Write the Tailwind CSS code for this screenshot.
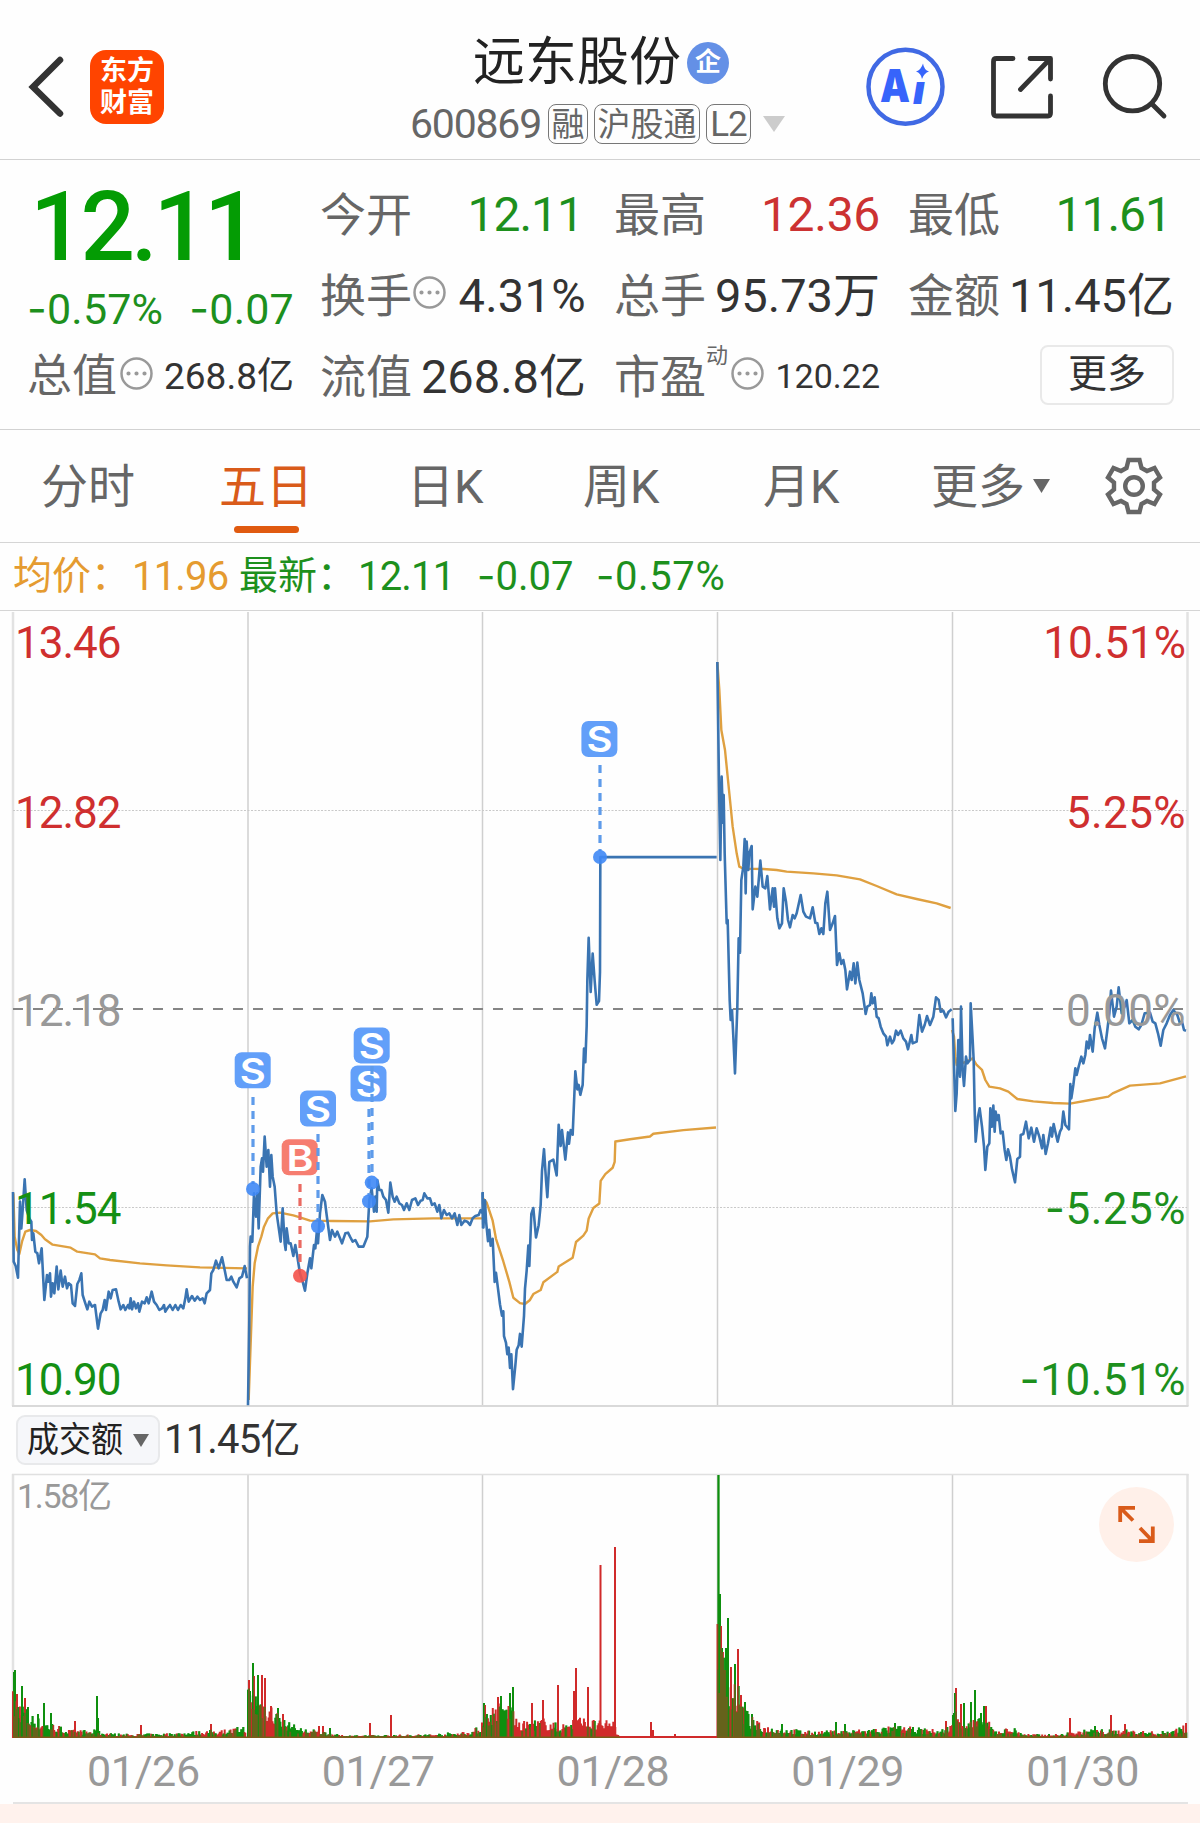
<!DOCTYPE html>
<html lang="zh-CN">
<head>
<meta charset="utf-8">
<title>远东股份 600869</title>
<script src="https://cdn.jsdelivr.net/npm/@tailwindcss/browser@4"></script>
</head>
<body class="w-[1200px] h-[1823px] overflow-hidden bg-[#fefefe] font-[Roboto,'Noto_Sans_CJK_SC',sans-serif] leading-none text-[#333] whitespace-nowrap">

<!-- Header -->
<header class="flex h-[160px] border-b border-[#d2d2d2]">
  <div class="flex w-[410px] pt-[50px] pl-[27px]">
    <svg class="mt-[6px] h-[62px] w-[38px]" viewBox="0 0 38 62" fill="none" stroke="#333" stroke-width="6.5"><path d="M33 4 6 31 33 57.500" stroke-linecap="round"/></svg>
    <div class="ml-[25px] flex h-[74px] w-[74px] flex-col items-center justify-center rounded-[16px] bg-[#ff4400] text-[27px] font-bold leading-[32px] text-white">
      <span>东方</span><span>财富</span>
    </div>
  </div>
  <div class="w-[420px]">
    <div class="mt-[37px] ml-[63px] flex h-[51px] items-center text-[52px] text-[#222]">
      <span>远东股份</span>
      <span class="ml-[6px] flex size-[42px] items-center justify-center rounded-full bg-[#6490e6] pb-[1px] text-[26px] font-bold text-white">企</span>
    </div>
    <div class="mt-[16px] flex h-[40px] items-center text-[#666]">
      <span class="w-[138px] text-[41px] tracking-[-1.2px]">600869</span>
      <span class="flex h-[40px] w-[40px] items-center justify-center rounded-[8px] border border-[#777] text-[33px]">融</span>
      <span class="ml-[6px] flex h-[40px] w-[106px] items-center justify-center rounded-[8px] border border-[#777] text-[33px]">沪股通</span>
      <span class="ml-[6px] flex h-[40px] w-[45px] items-center justify-center rounded-[8px] border border-[#777] text-[35px] tracking-[-1px]">L2</span>
      <svg class="ml-[11px] h-[16px] w-[24px]" viewBox="0 0 24 16"><path d="M1 0H23L12 16Z" fill="#ccc"/></svg>
    </div>
  </div>
  <div class="flex pt-[47px] pl-[36px]">
    <svg class="size-[80px]" viewBox="0 0 80 80">
      <circle cx="39.500" cy="39.800" r="37" fill="none" stroke="#4069e4" stroke-width="4.500"/>
      <text x="14" y="55" font-family="Inter" font-weight="900" font-size="46" fill="#3764fb" textLength="30" lengthAdjust="spacingAndGlyphs">A</text>
      <text x="47" y="56.500" font-family="Inter" font-weight="900" font-style="italic" font-size="40" fill="#3764fb" >ı</text>
      <path d="M57 16.500Q58 23 63 24.500Q58 26 56 32Q55 26 50 24.500Q55 23 57 16.500Z" fill="#3764fb"/>
    </svg>
    <svg class="ml-[43px] mt-[7px] size-[66px]" viewBox="0 0 66 66" fill="none" stroke="#333" stroke-width="4.800" stroke-linecap="round" stroke-linejoin="round"><path d="M24 4.500H7.500Q4.500 4.500 4.500 7.500V59Q4.500 62 7.500 62H59Q61.500 62 61.500 59V42M41 4.500H61.500V25M61 5 31.500 35.500"/></svg>
    <svg class="ml-[46px] mt-[7px] size-[68px]" viewBox="0 0 68 68" fill="none" stroke="#333" stroke-width="4.800" stroke-linecap="round"><circle cx="31.500" cy="29.700" r="27.200"/><path d="M51 50 63 62"/></svg>
  </div>
</header>

<!-- Quote summary -->
<section class="flex h-[270px] border-b border-[#d2d2d2]">
  <div class="w-[320px] pl-[27px]">
    <div class="mt-[19px] ml-[3px] h-[96px] text-[96px] font-medium tracking-[-4.1px] text-[#049c04]">12.11</div>
    <div class="mt-[12px] flex h-[43px] gap-[26px] text-[43px] tracking-[0.2px] text-[#1d901d]">
      <span><span class="font-[Inter]">-</span>0.57%</span><span><span class="font-[Inter]">-</span>0.07</span>
    </div>
    <div class="mt-[23px] flex h-[46px] items-center">
      <span class="text-[45px] text-[#666]">总值</span>
      <svg class="mr-[11px] ml-[3px] -mt-[6px] size-[33px]" viewBox="0 0 33 33"><circle cx="16.500" cy="16.500" r="15" fill="none" stroke="#999" stroke-width="2.500"/><path d="M8.500 16.500h.01M16.500 16.500h.01M24.500 16.500h.01" stroke="#999" stroke-width="4.200" stroke-linecap="round"/></svg>
      <span class="text-[37px]">268.8亿</span>
    </div>
  </div>
  <div class="grid h-[257px] w-[854px] grid-cols-[266px_266px_266px] grid-rows-3 gap-x-[28px] pt-[14px]">
    <div class="flex items-center justify-between"><span class="text-[46px] text-[#666]">今开</span><span class="pr-[3px] text-[48px] tracking-[-1px] text-[#1d901d]">12.11</span></div>
    <div class="flex items-center justify-between"><span class="text-[46px] text-[#666]">最高</span><span class="text-[48px] tracking-[-0.3px] text-[#cc3232]">12.36</span></div>
    <div class="flex items-center justify-between"><span class="text-[46px] text-[#666]">最低</span><span class="pr-[3px] text-[48px] tracking-[-1px] text-[#1d901d]">11.61</span></div>

    <div class="flex items-center"><span class="text-[46px] text-[#666]">换手</span>
      <svg class="-mt-[6px] ml-[1px] size-[33px]" viewBox="0 0 33 33"><circle cx="16.500" cy="16.500" r="15" fill="none" stroke="#999" stroke-width="2.500"/><path d="M8.500 16.500h.01M16.500 16.500h.01M24.500 16.500h.01" stroke="#999" stroke-width="4.200" stroke-linecap="round"/></svg>
      <span class="ml-auto text-[47px] tracking-[0.3px]">4.31%</span></div>
    <div class="flex items-center justify-between"><span class="text-[46px] text-[#666]">总手</span><span class="text-[47px]">95.73万</span></div>
    <div class="flex items-center justify-between"><span class="text-[46px] text-[#666]">金额</span><span class="text-[47px]">11.45亿</span></div>

    <div class="flex items-center justify-between"><span class="text-[46px] text-[#666]">流值</span><span class="text-[47px]">268.8亿</span></div>
    <div class="flex items-center"><span class="text-[46px] text-[#666]">市盈</span>
      <span class="-mt-[42px] text-[22px] text-[#666]">动</span>
      <svg class="-mt-[6px] ml-[3px] size-[33px]" viewBox="0 0 33 33"><circle cx="16.500" cy="16.500" r="15" fill="none" stroke="#999" stroke-width="2.500"/><path d="M8.500 16.500h.01M16.500 16.500h.01M24.500 16.500h.01" stroke="#999" stroke-width="4.200" stroke-linecap="round"/></svg>
      <span class="-mt-[2px] ml-auto text-[34px]">120.22</span></div>
    <div class="flex items-center justify-end"><span class="-mt-[3px] flex h-[60px] w-[134px] items-center justify-center rounded-[8px] border-2 border-[#e9e9e9] pb-[1px] text-[39px]">更多</span></div>
  </div>
</section>

<!-- Period tabs -->
<nav class="flex h-[113px] items-center border-b border-[#d5d5d5] text-[47px] text-[#666]">
  <span class="ml-[41px] w-[178px]">分时</span>
  <span class="relative w-[188px] text-[#d95b1a]">五日<i class="absolute top-[63px] left-[15px] h-[7px] w-[65px] rounded-full bg-[#e05a10]"></i></span>
  <span class="w-[176px]">日K</span>
  <span class="w-[180px]">周K</span>
  <span class="w-[168px]">月K</span>
  <span>更多</span>
  <svg class="ml-[8px] h-[14px] w-[17px]" viewBox="0 0 17 14"><path d="M0 0H17L8.500 14Z" fill="#666"/></svg>
  <svg class="ml-[54px] size-[60px]" viewBox="-30 -30 60 60" fill="none" stroke="#666" stroke-width="4.400"><circle r="8.800"/><path d="M-5.500-26H5.500L7.500-18 13-15 20.500-18 26-8.500 20-3.500V3.500L26 8.500 20.500 18 13 15 7.500 18 5.500 26H-5.500L-7.500 18-13 15-20.500 18-26 8.500-20 3.500V-3.500L-26-8.500-20.500-18-13-15-7.500-18Z"/></svg>
</nav>

<!-- Average and latest price -->
<div class="flex h-[68px] items-center border-b border-[#d5d5d5] pl-[13px] text-[40px] text-[#1d901d]">
  <span class="w-[119px] text-[39px] text-[#e59b30]">均价：</span>
  <span class="w-[107px] tracking-[-0.8px] text-[#e59b30]">11.96</span>
  <span class="w-[119px] text-[39px]">最新：</span>
  <span class="w-[119px] tracking-[-0.8px]">12.11</span>
  <span class="w-[119px]"><span class="font-[Inter]">-</span>0.07</span>
  <span class="tracking-[0.6px]"><span class="font-[Inter]">-</span>0.57%</span>
</div>

<!-- Five-day price chart -->
<svg class="block h-[796px] w-[1200px]" viewBox="0 611 1200 796" fill="none" font-family="Roboto" font-size="44">
  <g stroke="#d9d9d9" stroke-width="2"><path d="M13 612V1406M1187.500 612V1406" stroke="#e2e2e2" stroke-width="2.500"/><path d="M248 612V1406M482.500 612V1406M717.500 612V1406M952.500 612V1406" stroke="#cfcfcf" stroke-width="1.500"/><path d="M12 1406H1188.500"/></g>
  <path d="M13 810.500H1187M13 1207.500H1187" stroke="#c9c9c9" stroke-dasharray="2 1.500"/>
  <path d="M13 1009H1187" stroke="#858585" stroke-width="2" stroke-dasharray="10 10"/>

  <g stroke="#dfa040" stroke-width="2.400" stroke-linejoin="round">
    <g transform="translate(0 980) scale(.33333)">
      <polyline vector-effect="non-scaling-stroke" points="40,640 44,770 52,810 58,822 66,785 76,755 90,750 108,753 124,765 135,778 158,794 212,803 232,815 285,823 300,835 330,840 420,850 500,856 600,862 741,865"/>
      <polyline vector-effect="non-scaling-stroke" points="746,1260 752,1090 758,920 764,850 774,800 784,770 792,740 804,715 818,700 840,698 880,706 900,712 930,722 1000,723 1110,724 1180,718 1300,715 1448,715"/>
    </g>
    <polyline transform="translate(470 700) scale(.33333 .4528)" vector-effect="non-scaling-stroke" points="38,1100 50,1110 68,1150 78,1190 100,1240 118,1285 130,1320 150,1332 165,1334 180,1325 190,1312 212,1303 220,1286 262,1263 266,1251 308,1232 318,1197 340,1183 350,1172 356,1145 370,1122 388,1112 392,1062 406,1047 428,1033 434,1020 436,975 480,970 540,964 550,958 640,950 738,944"/>
    <polyline transform="translate(700 640) scale(.33333)" vector-effect="non-scaling-stroke" points="52,66 58,150 64,270 75,330 88,460 98,560 110,640 118,680 130,686 190,687 230,690 260,695 340,700 410,706 480,718 530,738 590,763 650,777 710,790 752,804"/>
    <polyline transform="translate(930 960) scale(.33333)" vector-effect="non-scaling-stroke" points="66,210 72,230 76,290 80,315 110,305 128,295 140,315 156,330 166,360 178,380 210,385 235,395 262,417 310,424 370,429 420,431 480,420 535,410 548,400 600,377 690,370 768,349"/>
  </g>

  <g stroke="#3a74b2" stroke-width="2.600" stroke-linejoin="round">
    <g transform="translate(0 980) scale(.33333)">
      <polyline vector-effect="non-scaling-stroke" points="39,636 41,845 47,858 54,893 60,665 64,745 68,690 74,598 80,690 88,715 94,725 96,780 100,760 106,815 112,820 117,850 125,805 133,960 141,885 145,905 150,880 153,950 158,910 163,940 170,860 175,928 182,872 188,920 195,890 201,925 206,910 213,915 218,970 225,978 232,912 238,900 244,880 248,945 256,970 262,988 268,965 276,980 285,975 294,1046 302,1000 308,990 314,960 318,990 326,935 332,955 338,930 348,928 356,965 362,988 370,975 376,990 384,975 388,985 392,955 396,988 402,965 408,985 414,970 418,995 426,965 434,970 440,952 446,970 455,935 462,965 470,975 478,990 486,985 492,975 496,995 502,985 510,975 518,990 526,975 534,990 542,975 550,985 556,955 560,928 566,965 576,948 584,962 592,950 600,960 608,955 614,970 620,940 630,930 634,880 640,870 648,842 656,865 666,832 674,870 680,900 688,900 694,890 700,905 710,922 718,895 726,890 734,858 741,895"/>
      <polyline vector-effect="non-scaling-stroke" points="744,1276 748,1020 750,800 752,770 757,785 762,640 768,710 772,640 776,745 782,560 786,535 789,575 794,470 800,560 805,510 810,620 814,525 818,590 824,620 830,700 842,785 848,685 854,790 857,810 860,745 866,790 872,790 880,828 886,795 892,830 900,880 908,905 915,932 922,880 930,835 934,865 942,795 946,805 950,760 954,790 960,700 967,645 975,665 980,705 990,780 996,750 1005,770 1012,755 1020,775 1026,790 1036,760 1044,758 1050,770 1058,785 1066,780 1076,800 1090,800 1096,785 1102,770 1108,660 1115,625 1122,695 1126,650 1130,695 1132,600 1138,630 1144,630 1150,650 1158,660 1165,698 1171,608 1178,650 1184,665 1190,650 1198,670 1206,675 1212,690 1220,670 1228,690 1236,660 1246,655 1254,675 1262,662 1268,660 1273,640 1282,655 1290,655 1296,675 1304,670 1312,695 1318,675 1324,715 1332,690 1340,705 1348,700 1356,715 1364,700 1372,735 1378,705 1384,735 1394,722 1402,725 1410,735 1418,715 1426,708 1436,705 1442,690 1448,700"/>
      <polyline vector-effect="non-scaling-stroke" points="1448,636 1449,745"/>
    </g>
    <polyline transform="translate(470 700) scale(.33333 .4528)" vector-effect="non-scaling-stroke" points="38,1088 40,1165 45,1105 48,1150 54,1195 58,1170 62,1205 68,1190 74,1285 78,1265 84,1300 90,1335 96,1360 100,1350 102,1405 108,1420 112,1445 116,1430 120,1475 124,1445 129,1522 136,1470 140,1435 146,1425 150,1400 155,1428 162,1360 165,1300 170,1260 175,1205 178,1250 184,1135 190,1122 198,1187 206,1160 212,1115 216,1040 222,992 228,1060 232,1098 238,1020 250,1015 260,1050 266,938 272,985 276,950 286,1015 294,955 297,980 302,950 308,960 316,820 322,860 326,850 331,872 338,850 342,770 346,800 350,720 352,620 356,525 362,645 368,560 374,620 380,673 387,665 390,600 391,347 740,347"/>
    <polyline transform="translate(700 640) scale(.33333)" vector-effect="non-scaling-stroke" points="52,66 57,430 61,660 65,410 69,548 71,465 74,640 80,850 83,840 89,1080 92,1140 96,1110 100,1190 105,1300 112,1100 116,895 120,938 124,720 130,680 134,597 137,760 140,605 145,690 148,640 155,618 158,808 166,740 172,770 181,662 188,740 196,745 202,708 210,808 218,745 222,800 225,745 232,835 238,865 246,850 251,745 258,785 264,840 270,862 278,825 284,835 290,820 302,765 310,815 318,830 330,835 338,802 346,848 352,850 358,882 364,865 370,882 376,790 382,755 390,870 398,850 405,828 411,975 418,940 424,972 430,960 436,990 441,1048 450,995 455,1020 461,970 466,1030 472,968 478,1020 488,1060 497,1122 502,1100 510,1095 514,1060 518,1090 524,1072 530,1130 536,1135 542,1160 550,1180 558,1190 562,1216 570,1190 576,1210 582,1200 588,1172 594,1185 602,1172 610,1195 618,1205 624,1228 634,1185 638,1210 650,1205 658,1125 666,1175 674,1155 681,1128 690,1155 700,1130 708,1072 716,1080 722,1115 730,1112 738,1132 746,1115 755,1108"/>
    <polyline transform="translate(930 960) scale(.33333)" vector-effect="non-scaling-stroke" points="68,175 76,453 80,400 85,240 90,350 93,140 98,330 102,378 108,290 112,310 120,300 122,130 128,240 131,300 134,450 137,545 144,470 149,445 156,500 162,560 166,630 172,560 178,550 181,445 186,500 190,437 194,515 197,455 202,480 206,465 212,520 218,515 224,570 229,600 234,568 240,590 246,628 255,667 262,597 270,590 272,525 280,522 288,485 296,535 304,503 312,545 320,505 328,530 336,565 340,525 347,582 354,550 362,503 366,530 371,492 376,515 383,545 390,515 395,505 400,455 406,495 417,508 421,372 424,415 430,375 436,325 440,345 446,320 454,290 460,310 466,285 470,245 476,265 480,225 488,275 494,205 502,158 508,195 516,235 525,265 532,210 538,160 543,92 552,170 560,140 566,82 575,160 584,140 590,120 598,190 608,180 616,200 626,208 634,195 644,160 660,158 668,185 676,190 684,220 692,257 700,210 710,190 720,165 730,150 742,165 750,190 756,185 762,210 768,212"/>
  </g>

  <!-- Axis labels -->
  <g letter-spacing="-1"><g fill="#cf2f2f"><text x="15" y="657.500">13.46</text><text x="15" y="827.500">12.82</text></g>
  <text x="15" y="1025.500" fill="#999">12.18</text>
  <g fill="#149014"><text x="15" y="1223.500">11.54</text><text x="15" y="1395">10.90</text></g></g>
  <g fill="#cf2f2f" text-anchor="end"><text x="1186" y="657.500">10.51%</text><text x="1186" y="827.500" letter-spacing=".4">5.25%</text></g>
  <text x="1186" y="1025.500" fill="#999" text-anchor="end" letter-spacing=".4">0.00%</text>
  <g fill="#1d901d" text-anchor="end" letter-spacing=".5"><text x="1186" y="1223.500"><tspan font-family="Inter">-</tspan>5.25%</text><text x="1186" y="1395"><tspan font-family="Inter">-</tspan>10.51%</text></g>

  <!-- Trade markers -->
  <g fill="#629ff9">
    <rect x="234.700" y="1052.300" width="36" height="36" rx="7"/><rect x="300" y="1090.500" width="36" height="36" rx="7"/>
    <rect x="353.700" y="1027.400" width="36" height="36" rx="7"/><rect x="350.500" y="1065.500" width="36" height="36" rx="7"/>
    <rect x="581.400" y="721" width="36" height="36" rx="7"/><rect x="281.700" y="1139.300" width="36" height="36" rx="7" fill="#f67d70"/>
  </g>
  <g fill="#fff" font-family="Inter" font-weight="600" font-size="36">
    <text x="239.700" y="1083.500" textLength="26" lengthAdjust="spacingAndGlyphs">S</text><text x="305" y="1121.700" textLength="26" lengthAdjust="spacingAndGlyphs">S</text><text x="358.700" y="1058.600" textLength="26" lengthAdjust="spacingAndGlyphs">S</text><text x="355.500" y="1096.700" textLength="26" lengthAdjust="spacingAndGlyphs">S</text><text x="586.400" y="752.200" textLength="26" lengthAdjust="spacingAndGlyphs">S</text><text x="286.500" y="1170.500" textLength="27" lengthAdjust="spacingAndGlyphs">B</text>
  </g>
  <g stroke="#5e9bea" stroke-width="3.200" stroke-dasharray="8 6">
    <path d="M253 1097V1184"/><path d="M318 1134V1220"/><path d="M369 1109V1196"/><path d="M372 1066V1177"/><path d="M600 765V851"/><path d="M300 1184V1268" stroke="#ea6a62"/>
  </g>
  <g fill="#3f88f5" fill-opacity=".9"><circle cx="253" cy="1189" r="7"/><circle cx="318" cy="1226.300" r="7"/><circle cx="369" cy="1201.300" r="7"/><circle cx="371.700" cy="1182.600" r="7"/><circle cx="600" cy="857" r="7"/><circle cx="300" cy="1275.700" r="7" fill="#f4524a"/></g>
</svg>

<!-- Turnover header -->
<div class="flex h-[66px] items-center pl-[16px]">
  <span class="flex h-[50px] w-[144px] items-center rounded-[9px] border-2 border-[#e8e9eb] bg-[#f6f7fa] pl-[9px] text-[32px] text-[#222]">
    <span class="scale-y-110">成交额</span>
    <svg class="ml-[10px] h-[13px] w-[16px]" viewBox="0 0 16 13"><path d="M0 0H16L8 13Z" fill="#666"/></svg>
  </span>
  <span class="ml-[4px] text-[40px] tracking-[-0.8px]">11.45亿</span>
</div>

<!-- Turnover chart -->
<div class="relative h-[266px]">
  <svg class="block h-[266px] w-[1200px]" viewBox="0 1473 1200 266" fill="none">
    <path d="M13 1474V1738M1187.500 1474V1738" stroke="#e2e2e2" stroke-width="2.500"/>
    <path d="M248 1474V1738M482.500 1474V1738M717.500 1474V1738M952.500 1474V1738" stroke="#cfcfcf" stroke-width="1.500"/>
    <path d="M12 1474.500H1188.500" stroke="#e0e0e0" stroke-width="1.500"/>
    <g id="bars"></g>
    <text x="17" y="1507.500" font-family="Roboto,Noto Sans CJK SC" font-size="34" fill="#999" textLength="95">1.58亿</text>
  </svg>
  <div class="absolute top-[14px] left-[1099px] size-[75px] rounded-full bg-[#fff0e9]">
    <svg class="size-[75px]" viewBox="0 0 75 75" fill="none" stroke="#d95b1a" stroke-width="3.800"><path d="M36 20.800H21.200V35M22 21.500 34 33.500M40 54.200H53.800V39.500M53 53.500 41 41"/></svg>
  </div>
</div>

<!-- Dates -->
<div class="flex h-[63px] items-center pl-[26px] text-center text-[43px] tracking-[-0.3px] text-[#999]">
  <span class="w-[235px] pt-[1px]">01/26</span><span class="w-[235px] pt-[1px]">01/27</span><span class="w-[235px] pt-[1px]">01/28</span><span class="w-[235px] pt-[1px]">01/29</span><span class="w-[235px] pt-[1px]">01/30</span>
</div>
<div class="ml-[13px] h-[2px] w-[1175px] bg-[#e4e4e4]"></div>
<div class="h-[19px] bg-[#fff2ed]"></div>

<script>
  // Turnover per day: height profile [x, h], share of red bars, peaks [x, h, colour]
  const days = [
    {p:[[13,48],[20,40],[30,25],[40,19],[55,14],[70,8],[95,8],[110,5],[130,4],[170,5],[210,8],[230,9],[246,13]], r:.5,
     s:[[14,66,'g'],[15,68,'g'],[17,44,'r'],[22,52,'g'],[25,40,'r'],[28,31,'g'],[38,24,'g'],[44,35,'g'],[51,25,'g'],[75,17,'r'],[97,42,'g'],[98,20,'g'],[141,13,'r'],[211,14,'r']]},
    {p:[[248,55],[262,45],[275,30],[285,18],[300,10],[320,8],[340,3],[380,3],[430,4],[470,7],[481,13]], r:.5,
     s:[[249,58,'r'],[253,75,'g'],[254,62,'r'],[258,63,'g'],[262,63,'r'],[265,60,'r'],[271,32,'r'],[278,30,'g'],[283,24,'r'],[319,12,'r'],[323,12,'r'],[330,10,'g'],[370,15,'r'],[391,23,'r']]},
    {p:[[482,22],[495,35],[513,35],[517,15],[545,20],[560,13],[575,22],[600,17],[614,17],[617,4],[622,1],[716,1]], r:.5,
     s:[[484,35,'g'],[485,33,'r'],[498,41,'r'],[501,42,'g'],[510,45,'g'],[513,51,'g'],[532,35,'r'],[543,38,'r'],[558,53,'r'],[574,47,'r'],[576,70,'r'],[588,51,'r'],[600.5,173,'r'],[615,191,'r'],[651,16,'r'],[653,8,'r'],[675,4,'r']]},
    {p:[[718,100],[728,75],[736,60],[742,38],[750,22],[762,13],[785,10],[810,7],[850,8],[900,12],[940,8],[951,14]], r:.4,
     s:[[717.5,114,'r'],[718.5,263,'g'],[720,144,'g'],[721,112,'r'],[722,90,'g'],[726,90,'g'],[728,120,'g'],[731,71,'r'],[735,74,'g'],[738,89,'r'],[741,43,'r'],[745,36,'g'],[752,24,'g'],[782,14,'g'],[836,16,'g'],[845,14,'g'],[895,15,'g'],[946,17,'r']]},
    {p:[[952,32],[965,20],[970,18],[986,20],[995,8],[1013,11],[1020,6],[1030,4],[1060,4],[1090,9],[1130,8],[1160,6],[1187,13]], r:.5,
     s:[[955,45,'g'],[956,50,'r'],[961,34,'r'],[964,35,'g'],[971,36,'g'],[975,48,'g'],[981,25,'g'],[984,32,'g'],[986,32,'r'],[1070,20,'r'],[1095,12,'g'],[1111,23,'r'],[1125,14,'r'],[1186,15,'r']]}
  ];
  let seed = 7;
  const rnd = () => (seed = (seed * 16807) % 2147483647) / 2147483647;
  const d = {r: '', g: ''};
  const bar = (x, h, c) => d[c] += `M${x.toFixed(1)} 1738v${-h.toFixed(1)}`;
  for (const {p, r, s} of days) {
    for (let x = p[0][0]; x < p[p.length - 1][0]; x += .98) {
      let i = 0;
      while (x > p[i + 1][0]) i++;
      const h = p[i][1] + (p[i + 1][1] - p[i][1]) * (x - p[i][0]) / (p[i + 1][0] - p[i][0]);
      const c = (x > 517 && x < 717) ? (x > 601 || rnd() < .75 ? 'r' : 'g') : (rnd() < r ? 'r' : 'g');
      bar(x, Math.max(2, h * (.4 + .65 * rnd() ** 1.5)), c);
    }
    s.forEach(([x, h, c]) => bar(x, h, c));
  }
  // Green is laid under and, half transparent, over the red so that overlaps turn olive
  document.getElementById('bars').innerHTML =
    `<path d="${d.g}" stroke="#0f8f0f" stroke-width="2"/><path d="${d.r}" stroke="#d02a2a" stroke-width="2"/><path d="${d.g}" stroke="#0f8f0f" stroke-width="2" stroke-opacity=".55"/><path d="M13 1737.300H620M717 1737.300H1187" stroke="#7a5a18" stroke-width="1.500"/><path d="M620 1737H717" stroke="#d02a2a" stroke-width="2"/>`;
</script>
</body>
</html>
